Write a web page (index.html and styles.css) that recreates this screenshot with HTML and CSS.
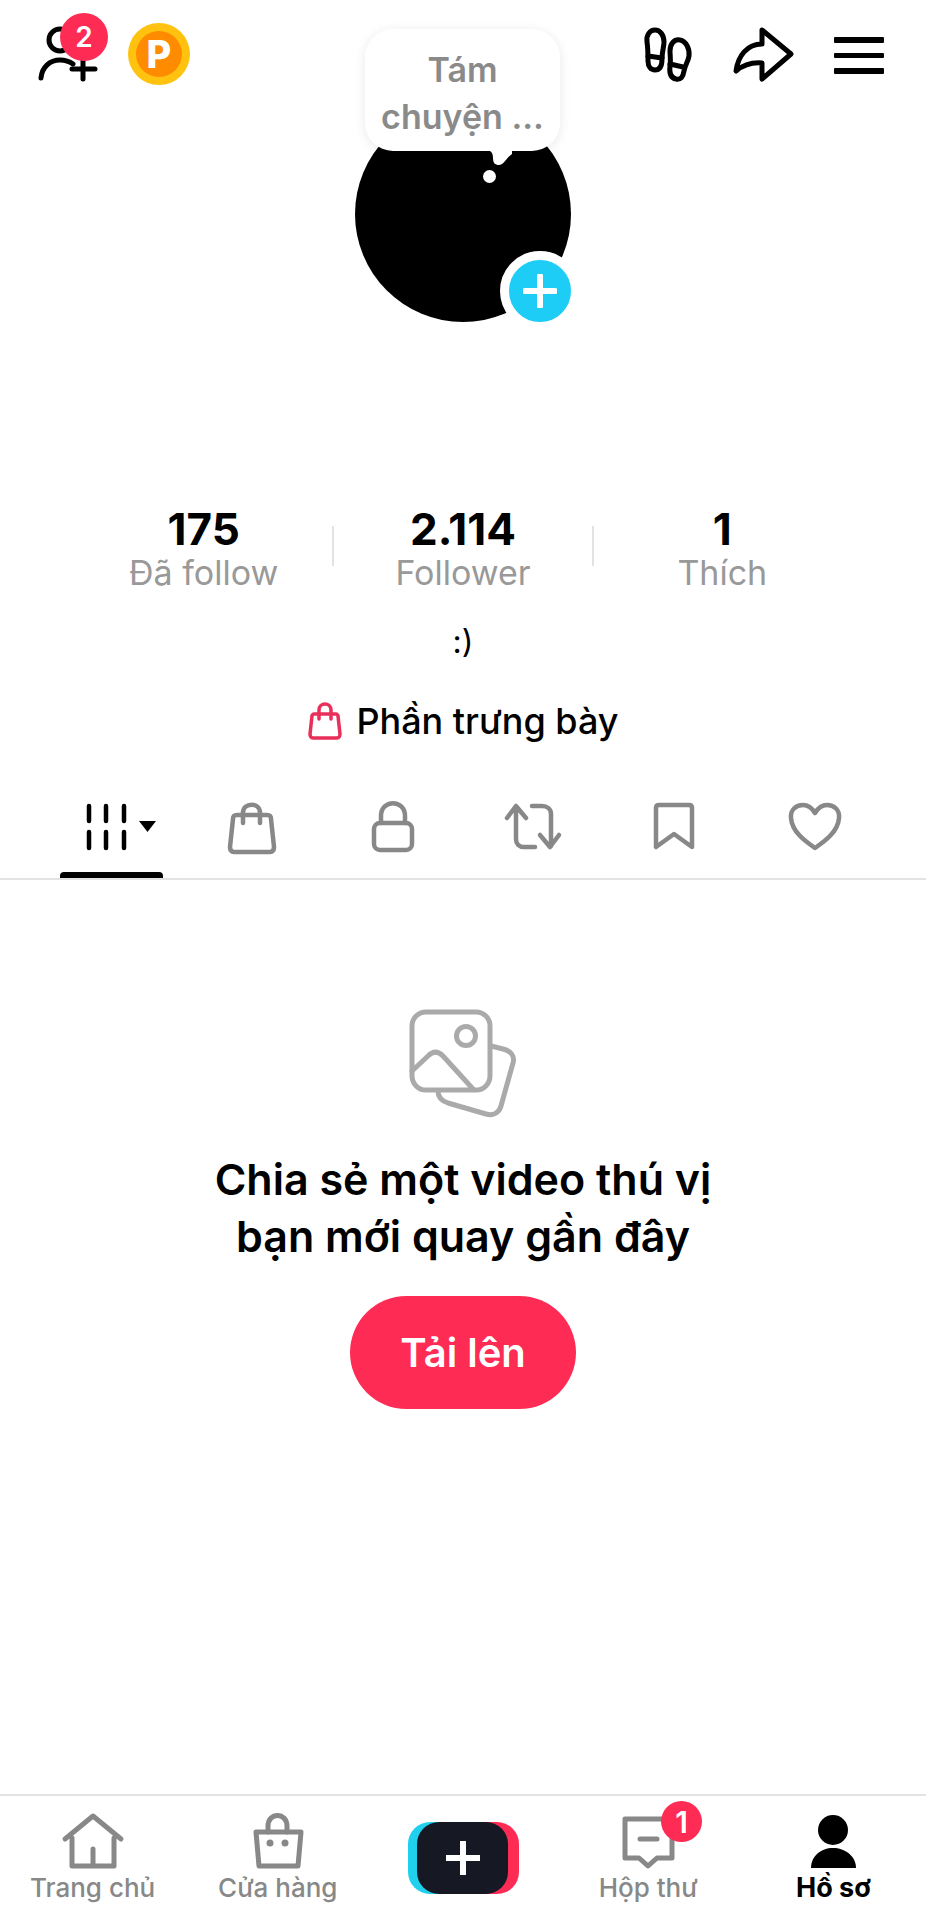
FILE: index.html
```html
<!DOCTYPE html>
<html lang="vi">
<head>
    <meta charset="UTF-8">
    <title>Hồ sơ</title>
    <link rel="stylesheet" href="styles.css">
</head>
<body>
    <div class="page">
        <div class="topbar">
            <div class="topbar-group left-group">
                <div class="add-friend">
                    <svg class="icon-dark" width="64" height="66" viewBox="36 20 64 66">
                        <circle cx="60" cy="40" r="11"/>
                        <path d="M41 78c1-11 9-18 19-18 5 0 9 1 13 4"/>
                        <path d="M72 69h23M83 60v19"/>
                    </svg>
                    <span class="badge badge-friend">2</span>
                </div>
                <div class="coin"><div class="coin-inner">P</div></div>
            </div>
            <div class="topbar-group right-group">
                <svg class="icon-dark" width="52" height="66" viewBox="643 20 52 66">
                    <path d="M648 42c-1-7 3-12 8-12s9 5 9 12c0 5-2 9-2 17 0 8-3 11-7 11s-7-3-7-9c0-7 0-13-1-19z"/>
                    <path d="M649 56l14 2"/>
                    <path d="M690 56c1-7-3-15-9-16s-10 4-10 11c0 5 1 8 0 15-1 8 1 12 6 13s7-2 8-8c1-6 4-9 5-15z"/>
                    <path d="M671 64l13 3"/>
                </svg>
                <svg class="icon-dark" width="62" height="66" viewBox="735 20 62 66">
                    <path d="M765 30l29 24-29 25V63c-12-1-20 3-26 8 2-15 11-27 26-27z"/>
                </svg>
                <div class="menu-icon"><span></span><span></span><span></span></div>
            </div>
        </div>

        <div class="avatar">
            <div class="bubble">Tám<br>chuyện ...</div>
            <svg class="bubble-tail" width="28" height="18" viewBox="0 0 28 18">
                <path d="M2 0c3 1 5 3 5 8 0 5 2 7 6 7 5 0 7-7 13-11V0z"/>
            </svg>
            <div class="bubble-dot"></div>
            <div class="avatar-plus">
                <svg width="34" height="34" viewBox="0 0 34 34"><path d="M17 2v30M2 17h30"/></svg>
            </div>
        </div>

        <div class="stats">
            <div class="stat"><div class="stat-num">175</div><div class="stat-label">Đã follow</div></div>
            <div class="divider"></div>
            <div class="stat"><div class="stat-num">2.114</div><div class="stat-label">Follower</div></div>
            <div class="divider"></div>
            <div class="stat"><div class="stat-num">1</div><div class="stat-label">Thích</div></div>
        </div>

        <div class="bio">:)</div>

        <div class="showcase">
            <svg class="icon-pink" width="36" height="40" viewBox="307 700 36 40">
                <path d="M314 713h22c1 0 2 1 2 2l2 18c0 2-1 4-3 4h-24c-2 0-3-2-3-4l2-18c0-1 1-2 2-2z"/>
                <path d="M319 718v-9c0-8 12-8 12 0v9"/>
            </svg>
            <span>Phần trưng bày</span>
        </div>

        <div class="tabs">
            <div class="tab active">
                <svg width="98" height="60" viewBox="62 798 98 60">
                    <path class="bars" d="M89 806v15M106 806v15M124 806v15M89 832v16M106 832v16M124 832v16"/>
                    <path class="caret" d="M139 821h17l-8.500 11z"/>
                </svg>
            </div>
            <div class="tab">
                <svg class="icon-gray" width="70" height="60" viewBox="217 798 70 60">
                    <path d="M237 815h30c3 0 4 1 4 4l3 28c0 3-1 5-4 5h-36c-3 0-4-2-4-5l3-28c0-3 1-4 4-4z"/>
                    <path d="M243 823v-10c0-11 17-11 17 0v10"/>
                </svg>
            </div>
            <div class="tab">
                <svg class="icon-gray" width="70" height="60" viewBox="358 798 70 60">
                    <rect x="374" y="823" width="38" height="27" rx="6"/>
                    <path d="M381 823v-7c0-17 24-17 24 0v7"/>
                </svg>
            </div>
            <div class="tab">
                <svg class="icon-gray" width="70" height="60" viewBox="498 798 70 60">
                    <path d="M507 818l9-12 10 12M516 807v32c0 5 3 8 8 8h11"/>
                    <path d="M532 806h10c5 0 9 3 9 8v32M540 835l10 12 9-12"/>
                </svg>
            </div>
            <div class="tab">
                <svg class="icon-gray" width="70" height="60" viewBox="639 798 70 60">
                    <path d="M656 847v-39c0-2 1-3 3-3h30c2 0 3 1 3 3v39l-18-13z"/>
                </svg>
            </div>
            <div class="tab">
                <svg class="icon-gray" width="70" height="60" viewBox="780 798 70 60">
                    <path d="M815 848c-7-5-23-15-24-30-1-8 5-13 12-13 5 0 9 3 12 8 3-5 7-8 12-8 7 0 13 5 12 13-1 15-17 25-24 30z"/>
                </svg>
            </div>
        </div>

        <div class="empty">
            <svg class="icon-light" width="125" height="120" viewBox="401 1005 125 120">
                <rect x="412" y="1013" width="78" height="78" rx="14"/>
                <circle cx="466" cy="1037" r="9.500"/>
                <path d="M412 1072l16-15c5-5 10-5 15 0l30 33"/>
                <path d="M491 1047l12 3c8 2 12 7 10 14l-12 43c-2 7-8 10-15 8l-38-11c-6-2-10-6-10-12"/>
            </svg>
            <div class="empty-title">Chia sẻ một video thú vị<br>bạn mới quay gần đây</div>
            <button class="upload-button">Tải lên</button>
        </div>

        <div class="bottom-nav">
            <div class="nav-item">
                <svg class="icon-nav" width="70" height="64" viewBox="58 1806 70 64">
                    <path d="M65 1838l28-23 28 23M72 1837v28h42v-28M93 1848v17"/>
                </svg>
                <span>Trang chủ</span>
            </div>
            <div class="nav-item">
                <svg class="icon-nav" width="70" height="64" viewBox="243 1806 70 64">
                    <path d="M256 1831h45l-3 34h-39z"/>
                    <path d="M268 1831v-6c0-14 19-14 19 0v6"/>
                    <circle class="fill-gray" cx="270" cy="1842" r="3.500"/>
                    <circle class="fill-gray" cx="285" cy="1842" r="3.500"/>
                </svg>
                <span>Cửa hàng</span>
            </div>
            <div class="nav-item">
                <div class="create-button">
                    <svg width="34" height="34" viewBox="0 0 34 34"><path d="M17 1v32M1 17h32"/></svg>
                </div>
            </div>
            <div class="nav-item">
                <div class="nav-icon-wrap">
                    <svg class="icon-nav" width="70" height="64" viewBox="613 1806 70 64">
                        <path d="M625 1818h47v39h-15l-9 8-9-8h-14z"/>
                        <path d="M640 1838h17"/>
                    </svg>
                    <span class="badge badge-inbox">1</span>
                </div>
                <span>Hộp thư</span>
            </div>
            <div class="nav-item current">
                <svg width="70" height="64" viewBox="798 1806 70 64">
                    <circle cx="833" cy="1829" r="15"/>
                    <path d="M811 1867c0-12 10-20 22-20s23 8 23 20z"/>
                </svg>
                <span>Hồ sơ</span>
            </div>
        </div>
    </div>
</body>
</html>
```

FILE: styles.css
```css
body {
    margin: 0;
    padding: 0;
    background: #fff;
    color: #000;
    font-family: Inter, "Noto Sans", sans-serif;
}
svg {
    display: block;
}
.page {
    display: flex;
    flex-direction: column;
    width: 926px;
    height: 1920px;
    overflow: hidden;
}
.icon-dark, .icon-pink, .icon-gray, .icon-light, .icon-nav {
    fill: none;
    stroke-linecap: round;
    stroke-linejoin: round;
}
.icon-dark {
    stroke: #000;
    stroke-width: 5;
}
.icon-pink {
    stroke: #e9305a;
    stroke-width: 3.5;
}
.icon-gray {
    stroke: #888;
    stroke-width: 4.5;
}
.icon-light {
    stroke: #aaa;
    stroke-width: 5;
}
.icon-nav {
    stroke: #888;
    stroke-width: 5;
}
.icon-nav .fill-gray {
    fill: #888;
    stroke: none;
}

/* top bar */
.topbar {
    display: flex;
    justify-content: space-between;
    padding: 20px 41px 20px 36px;
    height: 66px;
}
.topbar-group {
    display: flex;
}
.left-group {
    gap: 26px;
}
.right-group {
    gap: 38px;
}
.add-friend {
    position: relative;
    width: 64px;
    height: 66px;
}
.badge {
    position: absolute;
    display: flex;
    align-items: center;
    justify-content: center;
    border-radius: 50%;
    background: #fe2c55;
    color: #fff;
    font-weight: 600;
}
.badge-friend {
    left: 24px;
    top: -7px;
    width: 48px;
    height: 48px;
    font-size: 28px;
}
.coin {
    display: flex;
    align-items: center;
    justify-content: center;
    box-sizing: border-box;
    width: 62px;
    height: 62px;
    margin: 3px 2px;
    border-radius: 50%;
    background: #ffc20e;
}
.coin-inner {
    width: 46px;
    height: 46px;
    border-radius: 50%;
    background: #ff8c00;
    color: #fff;
    font-size: 38px;
    font-weight: 800;
    line-height: 46px;
    text-align: center;
}
.menu-icon {
    display: flex;
    flex-direction: column;
    gap: 10px;
    width: 50px;
    padding: 17px 1px 0 2px;
}
.menu-icon span {
    display: block;
    height: 5.5px;
    border-radius: 1px;
    background: #000;
}

/* avatar */
.avatar {
    position: relative;
    flex-shrink: 0;
    width: 216px;
    height: 216px;
    margin: 0 auto;
    border-radius: 50%;
    background: #000;
}
.bubble {
    position: absolute;
    left: 10px;
    top: -77px;
    width: 195px;
    height: 122px;
    box-sizing: border-box;
    padding-top: 17px;
    border-radius: 28px;
    background: #fff;
    box-shadow: 0 2px 12px rgba(0, 0, 0, 0.09);
    color: #8a8a8a;
    font-size: 34px;
    font-weight: 600;
    line-height: 47px;
    text-align: center;
}
.bubble-tail {
    position: absolute;
    left: 131px;
    top: 44px;
    fill: #fff;
}
.bubble-dot {
    position: absolute;
    left: 128px;
    top: 64px;
    width: 13px;
    height: 13px;
    border-radius: 50%;
    background: #fff;
}
.avatar-plus {
    position: absolute;
    left: 145px;
    top: 145px;
    display: flex;
    align-items: center;
    justify-content: center;
    width: 62px;
    height: 62px;
    border: 9px solid #fff;
    border-radius: 50%;
    background: #1dcdf5;
}
.avatar-plus path, .create-button path {
    fill: none;
    stroke: #fff;
    stroke-linecap: round;
    stroke-width: 6;
}

/* stats */
.stats {
    display: flex;
    align-items: center;
    margin-top: 184px;
    padding: 0 75px;
}
.stat {
    flex: 1;
    text-align: center;
}
.stat-num {
    font-size: 44px;
    font-weight: 700;
    line-height: 46px;
}
.stat-label {
    margin-top: 1px;
    color: #999;
    font-size: 34px;
    line-height: 40px;
}
.divider {
    width: 2px;
    height: 40px;
    margin-top: -8px;
    background: #e3e3e3;
}
.bio {
    margin-top: 29px;
    font-size: 32px;
    line-height: 40px;
    text-align: center;
}
.showcase {
    display: flex;
    align-items: center;
    justify-content: center;
    gap: 13px;
    height: 44px;
    margin-top: 37px;
    font-size: 36px;
    font-weight: 500;
}

/* tabs */
.tabs {
    display: flex;
    margin-top: 55px;
    padding: 0 41px;
    border-bottom: 2px solid #e3e3e3;
}
.tab {
    position: relative;
    display: flex;
    justify-content: center;
    width: 141px;
    padding-bottom: 20px;
}
.tab.active::after {
    content: "";
    position: absolute;
    left: 19px;
    bottom: 0;
    width: 103px;
    height: 6px;
    border-radius: 4px 4px 0 0;
    background: #000;
}
.bars {
    fill: none;
    stroke: #000;
    stroke-linecap: round;
    stroke-width: 4.5;
}
.caret {
    fill: #000;
}

/* empty state */
.empty {
    display: flex;
    flex: 1;
    flex-direction: column;
    align-items: center;
    padding-top: 124px;
}
.empty-title {
    margin-top: 27px;
    font-size: 43px;
    font-weight: 600;
    line-height: 57px;
    text-align: center;
}
.upload-button {
    width: 226px;
    height: 113px;
    margin-top: 31px;
    border: none;
    border-radius: 57px;
    background: #fe2c55;
    color: #fff;
    font-family: inherit;
    font-size: 40px;
    font-weight: 600;
}

/* bottom nav */
.bottom-nav {
    display: grid;
    grid-template-columns: repeat(5, 1fr);
    height: 113px;
    padding-top: 11px;
    border-top: 2px solid #e3e3e3;
}
.nav-item {
    display: flex;
    flex-direction: column;
    align-items: center;
    color: #888;
    font-size: 26px;
    font-weight: 500;
    line-height: 34px;
}
.nav-item.current {
    color: #000;
    font-size: 27px;
    font-weight: 700;
}
.nav-icon-wrap {
    position: relative;
}
.badge-inbox {
    left: 48px;
    top: -6px;
    width: 41px;
    height: 41px;
    font-size: 30px;
}
.create-button {
    position: relative;
    display: flex;
    align-items: center;
    justify-content: center;
    width: 91px;
    height: 72px;
    margin-top: 15px;
    border-radius: 22px;
    background: #161823;
    box-shadow: -9px 0 0 #1fd1ec, 11px 0 0 #fe2c55;
}
```
